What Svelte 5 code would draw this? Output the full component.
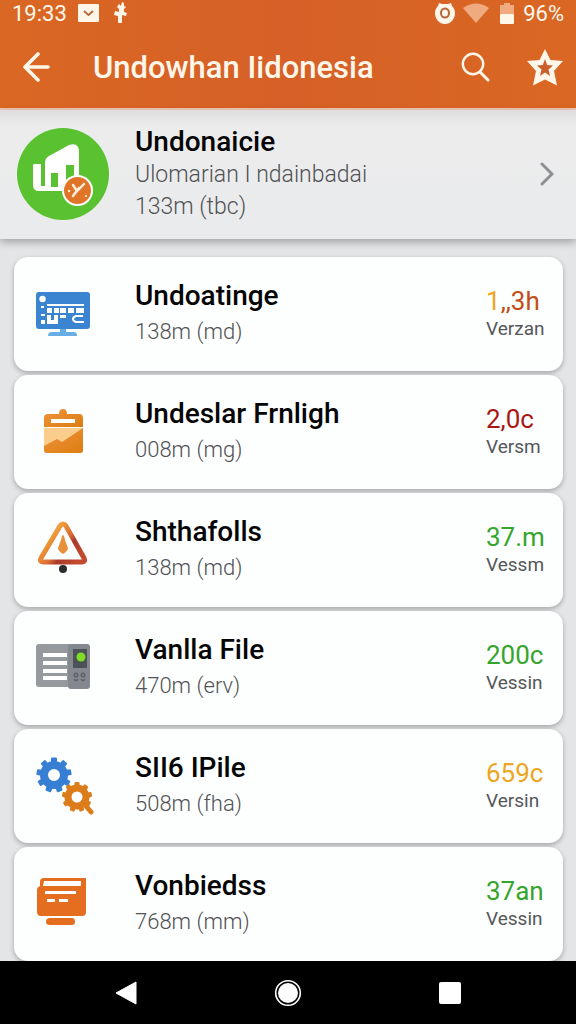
<script lang="ts">
	type Item = {
		icon: string;
		title: string;
		detail: string;
		value: string;
		label: string;
		tone: string;
	};

	const items: Item[] = [
		{ icon: 'monitor', title: 'Undoatinge', detail: '138m (md)', value: '1,,3h', label: 'Verzan', tone: 'rust' },
		{ icon: 'clipboard', title: 'Undeslar Frnligh', detail: '008m (mg)', value: '2,0c', label: 'Versm', tone: 'red' },
		{ icon: 'warning', title: 'Shthafolls', detail: '138m (md)', value: '37.m', label: 'Vessm', tone: 'green' },
		{ icon: 'device', title: 'Vanlla File', detail: '470m (erv)', value: '200c', label: 'Vessin', tone: 'green' },
		{ icon: 'gears', title: 'SII6 IPile', detail: '508m (fha)', value: '659c', label: 'Versin', tone: 'amber' },
		{ icon: 'folder', title: 'Vonbiedss', detail: '768m (mm)', value: '37an', label: 'Vessin', tone: 'green' }
	];

	const teeth = [0, 40, 80, 120, 160, 200, 240, 280, 320];
</script>

<div class="screen">
	<header>
		<div class="status">
			<span>19:33</span>
			<svg class="mail" width="21" height="18" viewBox="0 0 21 18">
				<rect width="21" height="18" rx="1" fill="#fff6ea" />
				<path d="M6 7l4.5 4L15 7" fill="none" stroke="#b5663a" stroke-width="1.8" />
			</svg>
			<svg class="plug" width="14" height="22" viewBox="0 0 14 22">
				<path d="M6 2l2 2 1-4 2 1v3l2 1-2 2v3l3 1-1 3-4-1v8H5v-7l-4-1 1-4 4 1V7L4 5z" fill="#fff6ea" />
			</svg>
			<span class="spacer"></span>
			<svg width="20" height="22" viewBox="0 0 20 22">
				<path d="M4 1l3 1h6l3-1 1 3c2 2 3 4 3 7 0 6-4 11-10 11S0 17 0 11c0-3 1-5 3-7z" fill="#fff6ea" />
				<ellipse cx="10" cy="11" rx="4" ry="4.6" fill="none" stroke="#b5663a" stroke-width="2" />
			</svg>
			<svg class="wifi" width="26" height="20" viewBox="0 0 26 20">
				<path d="M0 5Q13-4 26 5L13 20z" fill="#efaa80" />
			</svg>
			<svg class="battery" width="14" height="21" viewBox="0 0 14 21">
				<path d="M4 0h6v2h4v9H0V2h4z" fill="#efaa80" />
				<rect y="11" width="14" height="10" rx="1" fill="#fff6ea" />
			</svg>
			<span>96%</span>
		</div>
		<div class="toolbar">
			<button class="back" aria-label="Back">
				<svg width="28" height="30" viewBox="0 0 28 30">
					<path d="M16 2L3 15l13 13M3 15h23" fill="none" stroke="#fff6ea" stroke-width="3.6" stroke-linecap="round" stroke-linejoin="round" />
				</svg>
			</button>
			<h1>Undowhan Iidonesia</h1>
			<button aria-label="Search">
				<svg width="30" height="30" viewBox="0 0 30 30">
					<circle cx="12" cy="12" r="10.2" fill="none" stroke="#fff6ea" stroke-width="2.4" />
					<path d="M19 20l8 8" stroke="#fff6ea" stroke-width="3" stroke-linecap="round" />
				</svg>
			</button>
			<button class="star" aria-label="Favourite">
				<svg width="36" height="37" viewBox="0 0 36 37">
					<path d="M18 0l5.500 11 12.500 1-9 10 3 14.500-12-6-12 6L9 22 0 12l12.500-1z" fill="#fff6ea" />
					<path d="M18 10l2.200 6 5.800.5-4.500 4 1.500 6.500-5-3.500-5 3.500 1.500-6.500-4.500-4 5.800-.5z" fill="#cb5f2b" />
				</svg>
			</button>
		</div>
	</header>

	<a class="featured" href="#details">
		<svg class="logo" width="94" height="94" viewBox="0 0 94 94">
			<circle cx="47" cy="47" r="46" fill="#5ac130" />
			<path d="M18 37h7v22h4V36q0-5 4-7l20-11q10-3 10 7v39H23q-6 0-6-6V38z" fill="#fff" />
			<path d="M35 46h7v14h-7zM50 38h8v16h-8z" fill="#5ac130" />
			<circle cx="61.500" cy="63.500" r="15.500" fill="#fff" />
			<circle cx="61.500" cy="63.500" r="13.500" fill="#e0752a" />
			<path d="M57 58l4 6 7-7M63 61l-6 8" fill="none" stroke="#fff1dd" stroke-width="2.400" stroke-linecap="round" />
			<circle cx="53" cy="64" r="1.200" fill="#fff1dd" />
			<circle cx="70" cy="69" r="1" fill="#fff1dd" />
		</svg>
		<span class="text intro">
			<strong>Undonaicie</strong>
			<span>Ulomarian I ndainbadai</span>
			<span>133m (tbc)</span>
		</span>
		<svg width="14" height="24" viewBox="0 0 14 24">
			<path d="M2 2l10 10L2 22" fill="none" stroke="#8e8f92" stroke-width="3" stroke-linecap="round" />
		</svg>
	</a>

	<main>
		{#each items as item}
			<article>
				<span class="icon">
					{#if item.icon === 'monitor'}
						<svg width="54" height="46" viewBox="0 0 54 46">
							<rect y="1" width="54" height="37" rx="3" fill="#3b84d1" />
							<path d="M24 38h6v3h8q3 0 3 4H12q0-4 4-4h8z" fill="#67aee6" />
							<circle cx="6.500" cy="8" r="3.200" fill="#fff" />
							<path d="M11 13h37v2H11zM5 15h3v2H5zM5 23h4v2H5zM5 29h4v4H5zM11 17h5v5h-5zM18 17h5v5h-5zM24 17h6v5h-6zM32 17h6v5h-6zM40 17h8v5h-8zM11 24h4v5h3v-5h4v9H11zM24 24h6v3h-6z" fill="#fff" />
							<path d="M47 25h-7q-3 1-3 3t3 3h8" fill="none" stroke="#fff" stroke-width="2" />
						</svg>
					{:else if item.icon === 'clipboard'}
						<svg width="54" height="48" viewBox="0 0 54 48">
							<defs>
								<linearGradient id="board" x1="0" y1="0" x2="1" y2="1">
									<stop offset="0" stop-color="#f0943c" />
									<stop offset="1" stop-color="#dc7c12" />
								</linearGradient>
							</defs>
							<path d="M12 6h11q0-5 4-5t4 5h12q4 0 4 4v9H8v-9q0-4 4-4z" fill="url(#board)" />
							<rect x="15" y="11" width="24" height="4" fill="#fff" />
							<path d="M8 20h39v22q0 3-3 3H11q-3 0-3-3z" fill="#fbcd8d" />
							<path d="M8 38l13-7 5 3 21-14v22q0 3-3 3H11q-3 0-3-3z" fill="url(#board)" />
						</svg>
					{:else if item.icon === 'warning'}
						<svg width="54" height="58" viewBox="0 0 54 58">
							<defs>
								<linearGradient id="alert" x1="0" y1="0" x2="1" y2=".7">
									<stop offset=".3" stop-color="#f0a03a" />
									<stop offset=".6" stop-color="#d96a33" />
									<stop offset=".72" stop-color="#a83a2b" />
									<stop offset="1" stop-color="#c24a2d" />
								</linearGradient>
							</defs>
							<path d="M24 5q3-4 6 0l18 32q2 4-2 4H7q-4 0-2-4z" fill="none" stroke="url(#alert)" stroke-width="5" />
							<path d="M27 14q1 0 2 5l3 8q0 3-5 6-5-3-5-6l3-8q1-5 2-5z" fill="#e9913a" />
							<circle cx="27" cy="48" r="4" fill="#2c2b2f" />
						</svg>
					{:else if item.icon === 'device'}
						<svg width="54" height="50" viewBox="0 0 54 50">
							<rect y="1" width="36" height="43" rx="3" fill="#96999e" />
							<rect x="32" y="1" width="22" height="45" rx="3" fill="#85898f" />
							<path d="M7 10h24v4H7zM7 18h24v4H7zM7 26h24v4H7zM7 33h24v4H7z" fill="#fff" />
							<rect x="37" y="6" width="14" height="19" fill="#4c5357" />
							<circle cx="45" cy="14" r="4.500" fill="#80dc25" />
							<g fill="none" stroke="#5e6266" stroke-width="1.500">
								<circle cx="40" cy="32" r="1.800" />
								<circle cx="47" cy="32" r="1.800" />
								<path d="M38 36q2 3 4 0M45 36q2 3 4 0" />
							</g>
						</svg>
					{:else if item.icon === 'gears'}
						<svg width="58" height="58" viewBox="0 0 58 58">
							<g transform="translate(18 18)">
								{#each teeth as angle}
									<rect x="-3" y="-17.500" width="6" height="8" rx="1" fill="#367fd3" transform="rotate({angle})" />
								{/each}
								<circle r="10" fill="none" stroke="#367fd3" stroke-width="8" />
							</g>
							<g transform="translate(41 40)">
								{#each teeth as angle}
									<rect x="-2.500" y="-15" width="5" height="7" rx="1" fill="#dc7c1a" transform="rotate({angle})" />
								{/each}
								<circle r="9" fill="none" stroke="#dc7c1a" stroke-width="7" />
								<path d="M9 9l5 6" stroke="#dc7c1a" stroke-width="5" stroke-linecap="round" />
							</g>
						</svg>
					{:else}
						<svg width="54" height="54" viewBox="0 0 54 54">
							<path d="M8 1h42v34q0 4-4 4H5q-4 0-4-4V13q0-3 3-4V5q0-4 4-4z" fill="#e56d1f" />
							<path d="M8 4h37v5H7z" fill="#fff" />
							<path d="M9 14h31v3H9zM11 22h8v3h-8zM23 22h9v3h-9z" fill="#fff" />
							<path d="M14 41h22q3 0 3 4 0 3-3 3H14q-4 0-4-3 0-4 4-4z" fill="#e56d1f" />
						</svg>
					{/if}
				</span>
				<div class="text">
					<h2>{item.title}</h2>
					<p>{item.detail}</p>
				</div>
				<div class="stat">
					<span class="value {item.tone}">
						{#if item.tone === 'rust'}<span class="amber">{item.value[0]}</span>{item.value.slice(1)}{:else}{item.value}{/if}
					</span>
					<span class="label">{item.label}</span>
				</div>
			</article>
		{/each}
	</main>

	<nav>
		<button aria-label="Navigate back">
			<svg width="22" height="24" viewBox="0 0 22 24"><path d="M1 12L21 1v22z" fill="#fff" stroke="#fff" stroke-linejoin="round" /></svg>
		</button>
		<button aria-label="Home">
			<svg width="28" height="28" viewBox="0 0 28 28">
				<circle cx="14" cy="14" r="12.300" fill="none" stroke="#fff" stroke-width="1.600" />
				<circle cx="14" cy="14" r="10" fill="#fff" />
			</svg>
		</button>
		<button aria-label="Recent apps">
			<svg width="22" height="24" viewBox="0 0 22 24"><rect y="1" width="22" height="22" rx="2" fill="#fff" /></svg>
		</button>
	</nav>
</div>

<style>
	:global(body) {
		background: #e4e5e7;
	}

	.screen {
		display: flex;
		flex-direction: column;
		height: 100vh;
		overflow: hidden;
		font-family: Roboto, 'Liberation Sans', sans-serif;
	}

	header {
		flex: none;
		background: linear-gradient(90deg, #da6723, #d66027 50%, #da6723);
		border-bottom: 2px solid #f3c9b4;
		color: #fff6ea;
	}

	.status {
		display: flex;
		align-items: center;
		height: 26px;
		padding: 0 12px;
		font-size: 22px;
	}

	.mail {
		margin-left: 11px;
	}

	.plug {
		margin-left: 14px;
	}

	.spacer {
		flex: 1;
	}

	.wifi {
		margin-left: 8px;
	}

	.battery {
		margin: 0 9px 0 11px;
	}

	.toolbar {
		display: flex;
		align-items: center;
		height: 82px;
		padding: 0 13px 0 22px;
	}

	button {
		display: flex;
		padding: 0;
		border: none;
		background: none;
		cursor: pointer;
	}

	.back {
		margin-right: 43px;
	}

	.star {
		margin-left: 36px;
	}

	h1 {
		flex: 1;
		margin: 0;
		font-size: 31px;
		font-weight: 500;
		white-space: nowrap;
	}

	.featured {
		flex: none;
		display: flex;
		align-items: center;
		padding: 15px 22px 16px 16px;
		background: linear-gradient(#dededf, #ececed 16px, #eaebec);
		box-shadow: 0 3px 8px rgba(0, 0, 0, 0.3);
		text-decoration: none;
	}

	.logo {
		flex: none;
		margin-right: 25px;
	}

	.text {
		flex: 1;
		display: flex;
		flex-direction: column;
		min-width: 0;
		white-space: nowrap;
		font-size: 22px;
		font-weight: 300;
		line-height: 32px;
		color: #505255;
	}

	.intro {
		font-size: 23px;
	}

	strong,
	h2 {
		margin: 0;
		font-size: 28px;
		font-weight: 500;
		line-height: 34px;
		color: #050505;
	}

	p {
		margin: 0;
		line-height: 36px;
	}

	h2 {
		line-height: 36px;
	}

	main {
		flex: 1;
		display: flex;
		flex-direction: column;
		gap: 4px;
		min-height: 0;
		padding: 18px 13px 0 14px;
		overflow: hidden;
	}

	article {
		flex: none;
		display: flex;
		align-items: center;
		height: 114px;
		padding: 0 21px 0 22px;
		box-sizing: border-box;
		border-radius: 14px;
		background: #fdfefe;
		box-shadow: 0 2px 5px rgba(0, 0, 0, 0.28);
	}

	.icon {
		flex: none;
		display: flex;
		width: 99px;
	}

	.stat {
		display: flex;
		flex-direction: column;
		width: 56px;
		white-space: nowrap;
	}

	.value {
		font-size: 26px;
		line-height: 30px;
	}

	.label {
		font-size: 19px;
		line-height: 26px;
		color: #55575a;
	}

	.rust {
		color: #c24d16;
	}

	.red {
		color: #a81812;
	}

	.green {
		color: #35a52c;
	}

	.amber {
		color: #eda61e;
	}

	nav {
		flex: none;
		display: flex;
		justify-content: space-between;
		align-items: center;
		height: 63px;
		padding: 0 20%;
		background: #000;
	}
</style>
